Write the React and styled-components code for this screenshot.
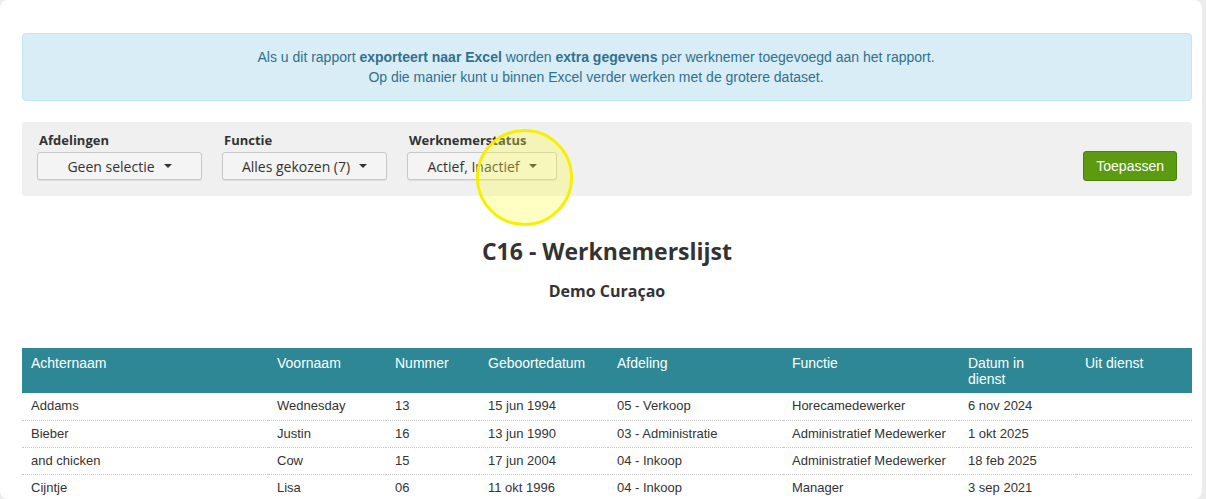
import styled, { createGlobalStyle } from "styled-components";

const GlobalStyle = createGlobalStyle`
  html, body {
    margin: 0;
    padding: 0;
    background: #ececec;
  }
  * {
    box-sizing: border-box;
  }
`;

const Card = styled.div`
  position: relative;
  width: 1202px;
  height: 499px;
  overflow: hidden;
  background: #fff;
  border-radius: 8px;
  padding: 33px 10px 0 22px;
  font-family: "Liberation Sans", Arial, sans-serif;
  color: #333;
`;

const Alert = styled.div`
  background: #d9edf7;
  border: 1px solid #bce8f1;
  border-radius: 4px;
  color: #31708f;
  font-size: 14px;
  line-height: 20px;
  text-align: center;
  padding: 13px 37px 13px 15px;
  b {
    font-weight: bold;
  }
`;

const FilterBar = styled.div`
  margin-top: 21px;
  background: #f0f0f0;
  border-radius: 3px;
  height: 74px;
  padding: 9px 15px 0 15px;
  display: flex;
  align-items: flex-start;
  gap: 20px;
`;

const Group = styled.div`
  display: flex;
  flex-direction: column;
`;

const Label = styled.div`
  font-family: "Open Sans", sans-serif;
  font-weight: 700;
  font-size: 13px;
  line-height: 18px;
  padding-left: 2px;
  margin-bottom: 3px;
`;

const Select = styled.button`
  width: ${(p) => p.$w}px;
  height: 28px;
  border: 1px solid #c8c8c8;
  border-radius: 3px;
  background: #f4f4f4;
  box-shadow: 0 1px 1px rgba(0, 0, 0, 0.08);
  font-family: "Open Sans", sans-serif;
  font-size: 14px;
  color: #333;
  display: flex;
  align-items: center;
  justify-content: center;
  gap: 9px;
  padding: 0;
`;

const Caret = styled.span`
  width: 0;
  height: 0;
  border-left: 4px solid transparent;
  border-right: 4px solid transparent;
  border-top: 4px solid #333;
`;

const ApplyButton = styled.button`
  margin-left: auto;
  margin-top: 20px;
  margin-right: 0;
  height: 30px;
  padding: 0 12px;
  background: #5c9a12;
  border: 1px solid #4b8209;
  border-radius: 3px;
  color: #fff;
  font-family: "Liberation Sans", Arial, sans-serif;
  font-size: 14px;
`;

const Title = styled.h1`
  margin: 41px 0 0;
  text-align: center;
  font-family: "Open Sans", sans-serif;
  font-weight: 700;
  font-size: 23px;
  line-height: 28px;
  color: #333;
`;

const SubTitle = styled.h2`
  margin: 16px 0 0;
  text-align: center;
  font-family: "Open Sans", sans-serif;
  font-weight: 700;
  font-size: 16px;
  line-height: 20px;
  color: #333;
`;

const Table = styled.table`
  margin-top: 47px;
  width: 1170px;
  border-collapse: collapse;
  table-layout: fixed;
  font-size: 13px;
`;

const Th = styled.th`
  background: #2e8795;
  color: #fff;
  font-weight: normal;
  font-size: 14px;
  text-align: left;
  vertical-align: top;
  padding: 7px ${(p) => (p.$narrow ? 40 : 9)}px 6px 9px;
  line-height: 16px;
  height: 45px;
`;

const Td = styled.td`
  padding: 0 9px;
  height: 27px;
  line-height: 26px;
  border-bottom: 1px dotted #c8c8c8;
  color: #333;
  white-space: nowrap;
`;

const Highlight = styled.div`
  position: absolute;
  left: 476px;
  top: 129px;
  width: 97px;
  height: 97px;
  border-radius: 50%;
  border: 3px solid #f6f000;
  background: rgba(255, 255, 60, 0.3);
  pointer-events: none;
`;

const columns = [
  ["Achternaam", 246],
  ["Voornaam", 118],
  ["Nummer", 93],
  ["Geboortedatum", 129],
  ["Afdeling", 175],
  ["Functie", 176],
  ["Datum in dienst", 117, true],
  ["Uit dienst", 116],
];

const rows = [
  ["Addams", "Wednesday", "13", "15 jun 1994", "05 - Verkoop", "Horecamedewerker", "6 nov 2024", ""],
  ["Bieber", "Justin", "16", "13 jun 1990", "03 - Administratie", "Administratief Medewerker", "1 okt 2025", ""],
  ["and chicken", "Cow", "15", "17 jun 2004", "04 - Inkoop", "Administratief Medewerker", "18 feb 2025", ""],
  ["Cijntje", "Lisa", "06", "11 okt 1996", "04 - Inkoop", "Manager", "3 sep 2021", ""],
];

export default function App() {
  return (
    <>
      <GlobalStyle />
      <Card>
        <Alert>
          Als u dit rapport <b>exporteert naar Excel</b> worden <b>extra gegevens</b> per werknemer
          toegevoegd aan het rapport.
          <br />
          Op die manier kunt u binnen Excel verder werken met de grotere dataset.
        </Alert>

        <FilterBar>
          <Group>
            <Label>Afdelingen</Label>
            <Select $w={165}>
              Geen selectie <Caret />
            </Select>
          </Group>
          <Group>
            <Label>Functie</Label>
            <Select $w={165}>
              Alles gekozen (7) <Caret />
            </Select>
          </Group>
          <Group>
            <Label>Werknemerstatus</Label>
            <Select $w={150}>
              Actief, Inactief <Caret />
            </Select>
          </Group>
          <ApplyButton>Toepassen</ApplyButton>
        </FilterBar>

        <Title>C16 - Werknemerslijst</Title>
        <SubTitle>Demo Curaçao</SubTitle>

        <Table>
          <colgroup>
            {columns.map(([name, w]) => (
              <col key={name} style={{ width: w }} />
            ))}
          </colgroup>
          <thead>
            <tr>
              {columns.map(([name, , narrow]) => (
                <Th key={name} $narrow={narrow}>
                  {name}
                </Th>
              ))}
            </tr>
          </thead>
          <tbody>
            {rows.map((r) => (
              <tr key={r[0]}>
                {r.map((c, i) => (
                  <Td key={i}>{c}</Td>
                ))}
              </tr>
            ))}
          </tbody>
        </Table>

        <Highlight />
      </Card>
    </>
  );
}
